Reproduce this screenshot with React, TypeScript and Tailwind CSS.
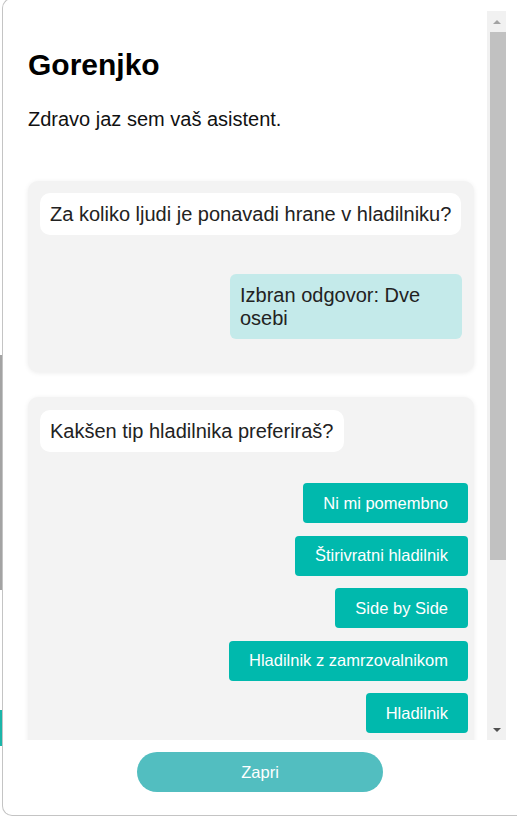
const font = { fontFamily: '"Liberation Sans", Arial, sans-serif' };

const options = [
  "Ni mi pomembno",
  "Štirivratni hladilnik",
  "Side by Side",
  "Hladilnik z zamrzovalnikom",
  "Hladilnik",
];

function Bubble({ children }: { children: React.ReactNode }) {
  return (
    <div className="self-start rounded-[10px] bg-white px-[10px] pt-[10px] pb-[9px] text-[20px] leading-[23px] text-[#222]">
      {children}
    </div>
  );
}

function Scrollbar() {
  return (
    <div className="mt-[12px] mr-[11px] flex h-[729px] w-[19px] flex-col items-center bg-[#f1f1f1]">
      <div className="flex h-[21px] items-center justify-center">
        <div className="h-0 w-0 border-x-[4px] border-b-[4px] border-x-transparent border-b-[#a3a3a3]" />
      </div>
      <div className="ml-[2px] h-[528px] w-[16px] bg-[#c1c1c1]" />
      <div className="flex flex-1 items-end justify-center pb-[8px]">
        <div className="h-0 w-0 border-x-[4px] border-t-[4px] border-x-transparent border-t-[#505050]" />
      </div>
    </div>
  );
}

export default function App() {
  return (
    <div className="flex h-[817px] w-[517px] overflow-hidden bg-white" style={font}>
      {/* page behind the dialog */}
      <div className="flex w-[2px] flex-col">
        <div className="h-[355px]" />
        <div className="h-[235px] bg-[#a3a3a3]" />
        <div className="h-[120px]" />
        <div className="h-[36px] bg-[#1bb5a9]" />
      </div>

      <div className="-mt-[2px] flex h-[818px] w-[515px] flex-col rounded-l-[10px] border border-r-0 border-[#c4c4c4] bg-white">
        <div className="flex h-[741px]">
          <div className="flex-1 overflow-hidden pl-[25px] pr-[13px] pt-[49px]">
            <h1 className="text-[30px] font-bold leading-[34px] text-black">Gorenjko</h1>
            <p className="mt-[26px] text-[20px] leading-[23px] text-[#111]">
              Zdravo jaz sem vaš asistent.
            </p>

            <div className="mt-[50px] flex flex-col rounded-[10px] bg-[#f3f3f3] px-[12px] pt-[12px] pb-[33px] shadow-[0_1px_5px_rgba(0,0,0,0.08)]">
              <Bubble>Za koliko ljudi je ponavadi hrane v hladilniku?</Bubble>
              <div className="mt-[39px] max-w-[232px] self-end rounded-[6px] bg-[#c4eaea] px-[10px] pt-[10px] pb-[9px] text-[20px] leading-[23px] text-[#222]">
                Izbran odgovor: Dve osebi
              </div>
            </div>

            <div className="mt-[25px] flex flex-col rounded-[10px] bg-[#f3f3f3] pl-[12px] pr-[6px] pt-[13px] pb-[20px] shadow-[0_1px_5px_rgba(0,0,0,0.08)]">
              <Bubble>Kakšen tip hladilnika preferiraš?</Bubble>
              <div className="mt-[31px] flex flex-col items-end gap-[12.5px]">
                {options.map((o) => (
                  <button
                    key={o}
                    className="h-[40px] rounded-[4px] bg-[#00b9ad] px-[20px] text-[16.5px] text-white"
                  >
                    {o}
                  </button>
                ))}
              </div>
            </div>
          </div>
          <Scrollbar />
        </div>

        <div className="flex justify-center pt-[12px]">
          <button className="h-[40px] w-[246px] rounded-full bg-[#52bec0] text-[16.5px] text-white">
            Zapri
          </button>
        </div>
      </div>
    </div>
  );
}
